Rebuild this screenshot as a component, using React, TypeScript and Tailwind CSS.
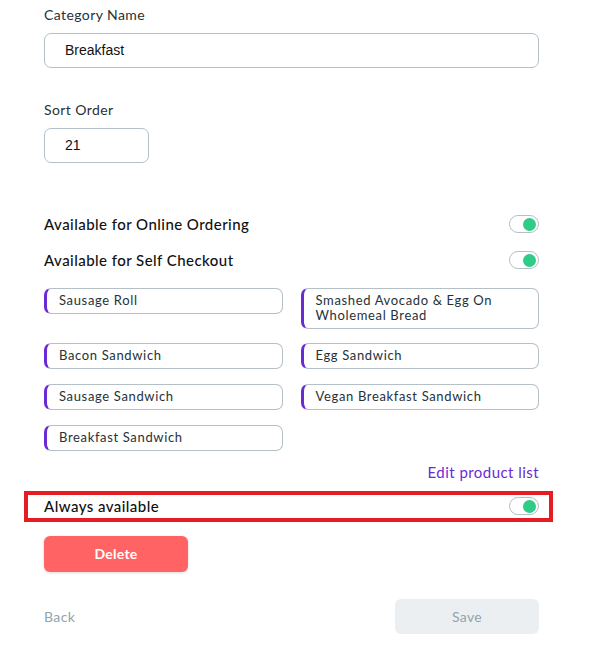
import React from "react";

const Toggle = () => (
  <div className="w-[30px] h-[18px] rounded-full border border-[#b4c0c6] bg-white flex items-center justify-end pr-[2px]">
    <div className="w-[13px] h-[13px] rounded-full bg-[#2ecc87]" />
  </div>
);

const Product = ({ name, tall }: { name: React.ReactNode; tall?: boolean }) => (
  <div
    className={`border border-[#b4c0c6] border-l-[3px] border-l-[#6a2bd6] rounded-[7px] pl-[12px] pr-2 text-[13px] leading-[15px] tracking-[0.05em] text-[#263238] ${
      tall ? "h-[41px] pt-[4px]" : "h-[26px] pt-[4px]"
    }`}
  >
    {name}
  </div>
);

export default function App() {
  return (
    <div
      className="w-[591px] h-[658px] bg-white text-[#1f2a30] relative"
      style={{ fontFamily: "Lato, 'Noto Sans', sans-serif" }}
    >
      <div className="px-[44px] pr-[52px] pt-[6px]">
        <div className="text-[14px] leading-[18px] tracking-[0.03em] text-[#263238]">Category Name</div>
        <div className="mt-[9px] h-[35px] rounded-[7px] border border-[#b4c0c6] flex items-center pl-[20px] text-[14px] text-[#111]" style={{ fontFamily: "'Liberation Sans', Arial, sans-serif" }}>
          Breakfast
        </div>
        <div className="mt-[33px] text-[14px] leading-[18px] tracking-[0.03em] text-[#263238]">Sort Order</div>
        <div className="mt-[9px] w-[105px] h-[35px] rounded-[7px] border border-[#b4c0c6] flex items-center pl-[20px] text-[14px] text-[#111]" style={{ fontFamily: "'Liberation Sans', Arial, sans-serif" }}>
          21
        </div>

        <div className="mt-[51px] flex items-center justify-between h-[20px]">
          <span className="text-[15px] font-medium tracking-[0.03em] text-[#111]">Available for Online Ordering</span>
          <Toggle />
        </div>
        <div className="mt-[16px] flex items-center justify-between h-[20px]">
          <span className="text-[15px] font-medium tracking-[0.03em] text-[#111]">Available for Self Checkout</span>
          <Toggle />
        </div>

        <div className="mt-[18px] grid grid-cols-2 gap-x-[18px] items-start">
          <Product name="Sausage Roll" />
          <Product name={<>Smashed Avocado &amp; Egg On<br />Wholemeal Bread</>} tall />
        </div>
        <div className="mt-[14px] grid grid-cols-2 gap-x-[18px] gap-y-[15px]">
          <Product name="Bacon Sandwich" />
          <Product name="Egg Sandwich" />
          <Product name="Sausage Sandwich" />
          <Product name="Vegan Breakfast Sandwich" />
          <Product name="Breakfast Sandwich" />
        </div>

        <div className="mt-[10px] text-right text-[15px] tracking-[0.03em] text-[#6a2bd6]">Edit product list</div>
      </div>

      <div className="mx-[24px] mt-[7px] w-[529px] h-[31px] border-[4px] border-[#e41c23] flex items-center justify-between pl-[16px] pr-[10px]">
        <span className="text-[15px] font-medium tracking-[0.03em] text-[#111]">Always available</span>
        <Toggle />
      </div>

      <div className="px-[44px] pr-[52px]">
        <button className="mt-[14px] w-[144px] h-[36px] rounded-[6px] bg-[#ff6363] text-white text-[14px] font-bold tracking-[0.02em] shadow-[0_1px_3px_rgba(0,0,0,0.15)]">
          Delete
        </button>
        <div className="mt-[27px] flex items-center justify-between">
          <span className="text-[14px] tracking-[0.03em] text-[#90a4ae]">Back</span>
          <button className="w-[144px] h-[35px] rounded-[6px] bg-[#eceff1] text-[#90a4ae] text-[14px] tracking-[0.02em]">Save</button>
        </div>
      </div>
    </div>
  );
}
